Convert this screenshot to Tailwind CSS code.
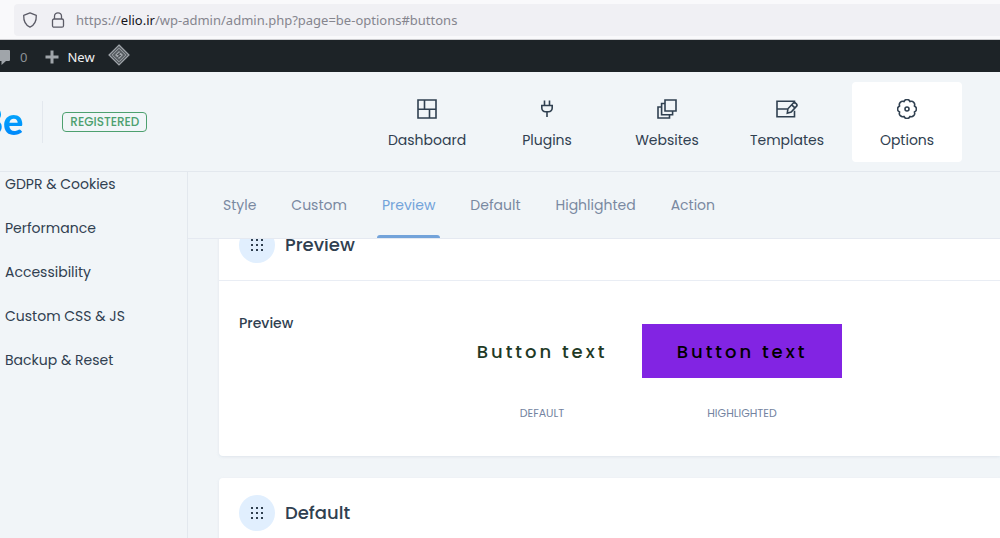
<!DOCTYPE html>
<html lang="en">
<head>
<meta charset="utf-8">
<meta name="viewport" content="width=device-width, initial-scale=1">
<title>Be Options</title>
<script src="https://cdn.jsdelivr.net/npm/@tailwindcss/browser@4"></script>
</head>
<body class="flex h-screen flex-col overflow-hidden bg-[#f1f5f8] font-[Poppins,Inter,sans-serif] text-sm text-[#304050]">
  <div class="flex h-10 shrink-0 items-center border-b border-[#cccccf] bg-[#f9f9fb] pl-3.5">
    <div class="flex h-8 flex-1 items-center rounded-l bg-[#f0f0f4] pl-2">
      <svg class="size-4" viewBox="0 0 16 16" fill="none" stroke="#5b5b66" stroke-width="1.3" stroke-linejoin="round" aria-hidden="true"><path d="M8 .9 14.3 3.3C14.5 9 12.500 13.200 8 15.200 3.500 13.200 1.500 9 1.700 3.300Z"/></svg>
      <svg class="ml-3 size-4" viewBox="0 0 16 16" fill="none" stroke="#5b5b66" stroke-width="1.3" aria-hidden="true"><rect x="2.500" y="7" width="11" height="8.200" rx="1.500"/><path d="M4.500 7V4.300a3.500 3.500 0 0 1 7 0V7"/></svg>
      <div class="ml-2.5 pt-0.5 font-['Noto_Sans',sans-serif] text-[13px] whitespace-nowrap text-[#85858e]">https://<span class="text-[#15141a]">elio.ir</span>/wp-admin/admin.php?page=be-options#buttons</div>
    </div>
  </div>

  <nav aria-label="Admin bar" class="flex h-8 shrink-0 items-center bg-[#1d2327] pt-0.5 font-['Noto_Sans',sans-serif] text-[13px]">
    <a href="#" class="flex items-center gap-2.5 text-[#8c9196]">
      <svg class="-ml-1.5 size-4" viewBox="0 0 16 16" fill="#a0a5aa" aria-hidden="true"><path d="M1 1h14a1 1 0 0 1 1 1v9a1 1 0 0 1-1 1h-3l-4.500 4v-4H1z"/></svg>0</a>
    <a href="#" class="ml-4.5 flex items-center gap-2 text-[#f0f0f1]">
      <svg class="size-3.5" viewBox="0 0 14 14" fill="#a0a5aa" aria-hidden="true"><path d="M5.500.5h3v5h5v3h-5v5h-3v-5h-5v-3h5z"/></svg>New</a>
    <a href="#" aria-label="Site tools" class="ml-[13px]">
      <svg class="-mt-1 size-5.5" viewBox="0 0 22 22" fill="none" aria-hidden="true"><path d="M11 1 21 11 11 21 1 11Z" fill="#555b60" stroke="#a0a5aa" stroke-width="1.200"/><path d="m11 4.200 6.800 6.800-6.800 6.800L4.200 11Z" stroke="#a0a5aa"/><path d="m11 7 4 4-4 4-4-4Z" fill="#a0a5aa"/><path d="m12.500 8.500-3 2 3 1-3 2" stroke="#363b40"/></svg>
    </a>
  </nav>

  <header class="flex h-[100px] shrink-0 items-center border-b border-[#e3e8ee] pr-[38px]">
    <div class="-ml-[22px] bg-gradient-to-t from-[#007cfa] to-[#15b5fc] bg-clip-text pb-1 font-[Lato,sans-serif] text-[38px] leading-10 font-black text-transparent">Be</div>
    <div class="ml-[19px] h-[42px] border-l border-[#e3e8ee]"></div>
    <span class="ml-[19px] rounded border border-[#4da06f] px-[7px] text-xs leading-[18px] font-medium text-[#4da06f]">REGISTERED</span>
    <nav aria-label="Main" class="ml-auto flex gap-2.5">
      <a href="#" class="flex h-20 w-[110px] flex-col items-center gap-[11px] pt-[17px] leading-5">
        <svg class="size-5" viewBox="0 0 20 20" fill="none" stroke="currentColor" stroke-width="1.600" aria-hidden="true"><path d="M1 1h18v18H1zM1 10.200h18M7.500 1v9.200M12.500 10.200V19"/></svg>Dashboard</a>
      <a href="#" class="flex h-20 w-[110px] flex-col items-center gap-[11px] pt-[17px] leading-5">
        <svg class="size-5" viewBox="0 0 20 20" fill="none" stroke="currentColor" stroke-width="1.600" aria-hidden="true"><path d="M7.500 1.500v4.500M12.500 1.500v4.500M4.800 6.500h10.400v2.600a3.600 3.600 0 0 1-3.600 3.600H8.400a3.600 3.600 0 0 1-3.600-3.600zM10 12.800V18"/></svg>Plugins</a>
      <a href="#" class="flex h-20 w-[110px] flex-col items-center gap-[11px] pt-[17px] leading-5">
        <svg class="size-5" viewBox="0 0 20 20" fill="none" stroke="currentColor" stroke-width="1.600" aria-hidden="true"><path d="M8 1h11v11H8zM8 4.500H4.600v11.300h11V12M4.600 8H1v11h11.500v-3.200"/></svg>Websites</a>
      <a href="#" class="flex h-20 w-[110px] flex-col items-center gap-[11px] pt-[17px] leading-5">
        <svg class="h-5 w-[22px]" viewBox="0 0 22 20" fill="none" stroke="currentColor" stroke-width="1.600" aria-hidden="true"><path d="M18.500 4.500V2.200H1v15.600h17.500v-6M1 10h10.500"/><path d="m11.300 14.200.6-4.400 5.200-5.600a1.800 1.800 0 0 1 2.500 0l.8.7a1.800 1.800 0 0 1 0 2.500l-5.200 5.600ZM15.700 5.800l3.200 3"/></svg>Templates</a>
      <a href="#" aria-current="page" class="flex h-20 w-[110px] flex-col items-center gap-[11px] rounded bg-white pt-[17px] leading-5">
        <svg class="size-5" viewBox="0 0 20 20" fill="none" stroke="currentColor" stroke-width="1.600" stroke-linejoin="round" aria-hidden="true"><circle cx="10" cy="10" r="2"/><path d="M6.940 2.610A3.300 3.300 0 0 1 13.060 2.610A3.300 3.300 0 0 1 17.390 6.940A3.300 3.300 0 0 1 17.390 13.060A3.300 3.300 0 0 1 13.060 17.390A3.300 3.300 0 0 1 6.940 17.390A3.300 3.300 0 0 1 2.610 13.060A3.300 3.300 0 0 1 2.610 6.940A3.300 3.300 0 0 1 6.940 2.610Z"/></svg>Options</a>
    </nav>
  </header>

  <div class="flex min-h-0 flex-1">
    <aside class="w-[188px] shrink-0 overflow-hidden border-r border-[#e3e8ee]">
      <nav aria-label="Option sections" class="-mt-2.5 flex flex-col pl-[5px] leading-[44px]">
        <a href="#">GDPR &amp; Cookies</a>
        <a href="#">Performance</a>
        <a href="#">Accessibility</a>
        <a href="#">Custom CSS &amp; JS</a>
        <a href="#">Backup &amp; Reset</a>
      </nav>
    </aside>
    <main class="flex min-w-0 flex-1 flex-col">
      <nav aria-label="Button options" class="flex h-[67px] shrink-0 gap-[25px] border-b border-[#e5e9f1] pl-[30px] leading-[66px] text-[#7a89a1]">
        <a href="#" class="px-[5px]">Style</a>
        <a href="#" class="px-[5px]">Custom</a>
        <a href="#" aria-current="true" class="relative px-[5px] text-[#73a3da]">Preview<span class="absolute inset-x-0 bottom-0 h-[3px] rounded-t-sm bg-[#73a3da]"></span></a>
        <a href="#" class="px-[5px]">Default</a>
        <a href="#" class="px-[5px]">Highlighted</a>
        <a href="#" class="px-[5px]">Action</a>
      </nav>
      <div class="min-h-0 flex-1 overflow-hidden pl-[31px]">
        <section class="-mt-[29px] rounded-l bg-white shadow-sm shadow-[#d9e1ea]/60">
          <div class="flex h-[71px] items-center gap-2.5 border-b border-[#e9edf4] pl-5">
            <span class="grid size-9 place-items-center rounded-full bg-[#e1effe]">
              <svg class="size-3" viewBox="0 0 12 12" fill="#304050" aria-hidden="true"><path d="M0 0h2v2H0zM5 0h2v2H5zM10 0h2v2h-2zM0 5h2v2H0zM5 5h2v2H5zM10 5h2v2h-2zM0 10h2v2H0zM5 10h2v2H5zM10 10h2v2h-2z"/></svg>
            </span>
            <h2 class="text-lg font-medium">Preview</h2>
          </div>
          <div class="flex h-[175px] pl-5">
            <h3 class="w-[203px] pt-8 leading-5 font-medium">Preview</h3>
            <div class="flex pt-[43px] text-lg font-medium">
              <div class="flex w-[200px] flex-col items-center gap-[25px]">
                <button type="button" class="h-[54px] w-full pt-0.5 tracking-[3px] text-[#1f3a26]">Button text</button>
                <span class="text-[11px] leading-5 font-normal text-[#73839f]">DEFAULT</span>
              </div>
              <div class="flex w-[200px] flex-col items-center gap-[25px]">
                <button type="button" class="h-[54px] w-full bg-[#8224e3] pt-0.5 tracking-[3px] text-black">Button text</button>
                <span class="text-[11px] leading-5 font-normal text-[#73839f]">HIGHLIGHTED</span>
              </div>
            </div>
          </div>
        </section>
        <section class="mt-[22px] h-[200px] rounded-l bg-white shadow-sm shadow-[#d9e1ea]/60">
          <div class="flex h-[71px] items-center gap-2.5 border-b border-[#e9edf4] pl-5">
            <span class="grid size-9 place-items-center rounded-full bg-[#e1effe]">
              <svg class="size-3" viewBox="0 0 12 12" fill="#304050" aria-hidden="true"><path d="M0 0h2v2H0zM5 0h2v2H5zM10 0h2v2h-2zM0 5h2v2H0zM5 5h2v2H5zM10 5h2v2h-2zM0 10h2v2H0zM5 10h2v2H5zM10 10h2v2h-2z"/></svg>
            </span>
            <h2 class="text-lg font-medium">Default</h2>
          </div>
        </section>
      </div>
    </main>
  </div>
</body>
</html>
